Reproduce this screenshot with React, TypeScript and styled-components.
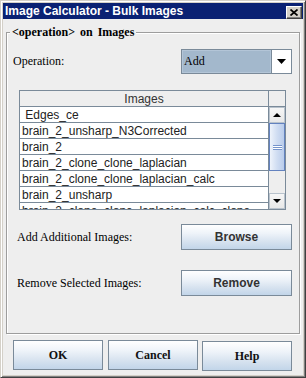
import React from 'react';
import styled, { createGlobalStyle } from 'styled-components';

const GlobalStyle = createGlobalStyle`
  html, body { margin: 0; padding: 0; background: #ffffff; }
  body { width: 306px; height: 378px; overflow: hidden; }
  *, *::before, *::after { box-sizing: border-box; }
`;

const SANS = `"Liberation Sans", Arial, sans-serif`;
const SERIF = `"Liberation Serif", "Times New Roman", serif`;

const Frame = styled.div`
  width: 306px;
  height: 378px;
  display: flex;
  flex-direction: column;
  background: #d4d0c8;
  border: 1px solid;
  border-color: #d4d0c8 #404040 #404040 #d4d0c8;
  box-shadow: inset 1px 1px 0 #ffffff, inset -1px -1px 0 #808080;
  padding: 2px;
`;

const TitleBar = styled.div`
  height: 16px;
  flex: none;
  display: flex;
  align-items: center;
  justify-content: space-between;
  padding: 0 1px 0 2px;
  background: #0a2173;
  color: #ffffff;
  font: bold 12px ${SANS};
`;

const TitleText = styled.span`
  white-space: nowrap;
  line-height: 16px;
`;

const CloseButton = styled.div`
  width: 16px;
  height: 13px;
  align-self: flex-end;
  display: flex;
  align-items: center;
  justify-content: center;
  background: #d4d0c8;
  border: 1px solid;
  border-color: #ffffff #404040 #404040 #ffffff;
  box-shadow: inset -1px -1px 0 #808080;
`;

const Content = styled.div`
  flex: 1;
  display: flex;
  flex-direction: column;
  background: #eeeeee;
  padding: 0 3px;
`;

const Group = styled.fieldset`
  margin: 6px 0 0 0;
  padding: 10px 0 37px 0;
  border: 1px solid #9d9d9d;
  box-shadow: inset 1px 1px 0 #ffffff, 1px 1px 0 #ffffff;
  min-width: 0;
  display: flex;
  flex-direction: column;
`;

const GroupTitle = styled.legend`
  margin-left: 3px;
  padding: 0 2px;
  background: #eeeeee;
  font: bold 12px ${SERIF};
  line-height: 14px;
  color: #000000;
  word-spacing: 2px;
`;

const FormRow = styled.div<{ $indent: number; $gap?: number; $h: number }>`
  display: flex;
  align-items: center;
  justify-content: space-between;
  height: ${(p) => p.$h}px;
  margin-top: ${(p) => p.$gap ?? 0}px;
  padding: 0 7px 0 ${(p) => p.$indent}px;
`;

const Label = styled.span`
  font: 12px ${SERIF};
  color: #000000;
  white-space: nowrap;
`;

const Combo = styled.div`
  width: 111px;
  height: 25px;
  display: flex;
  border: 1px solid #7a8a99;
  background: #ffffff;
`;

const ComboValue = styled.div`
  flex: 1;
  display: flex;
  align-items: center;
  padding-left: 2px;
  background: #a3b8cc;
  border-right: 1px solid #7a8a99;
  box-shadow: inset 0 0 0 1px #b3c5d7;
  font: 12px ${SERIF};
  color: #000000;
`;

const ComboArrow = styled.div`
  width: 19px;
  display: flex;
  align-items: center;
  justify-content: center;
  background: #ffffff;
`;

const TablePane = styled.div`
  margin: 16px 13px 0 12px;
  height: 120px;
  border: 1px solid #7a8a99;
  display: grid;
  grid-template-columns: 1fr 16px;
  grid-template-rows: 16px 1fr;
  background: #ffffff;
  overflow: hidden;
`;

const HeaderCell = styled.div<{ $last?: boolean }>`
  background: #eeeeee;
  border-bottom: 1px solid #7a8a99;
  border-right: ${(p) => (p.$last ? 'none' : '1px solid #7a8a99')};
  display: flex;
  align-items: center;
  justify-content: center;
  font: 12px ${SANS};
  color: #333333;
`;

const Body = styled.div`
  border-right: 1px solid #7a8a99;
  overflow: hidden;
  display: flex;
  flex-direction: column;
`;

const Row = styled.div`
  flex: none;
  height: 16px;
  border-bottom: 1px solid #7a8a99;
  display: flex;
  align-items: center;
  padding-left: 2px;
  background: #ffffff;
  font: 12px ${SANS};
  color: #222222;
  white-space: pre;
`;

const ScrollBar = styled.div`
  display: flex;
  flex-direction: column;
  background: #eeeeee;
  overflow: hidden;
`;

const ArrowButton = styled.div`
  flex: none;
  height: 16px;
  display: flex;
  align-items: center;
  justify-content: center;
  background: linear-gradient(to bottom, #f6f6f6, #e8e8e8);
  border: 1px solid #b8c2cc;
`;

const Thumb = styled.div`
  flex: none;
  height: 48px;
  display: flex;
  align-items: center;
  justify-content: center;
  border: 1px solid #6382bf;
  background: linear-gradient(to right, #eef3fb, #d0ddf2 50%, #b9cceb);
`;

const Grip = styled.div`
  width: 9px;
  height: 5px;
  background: repeating-linear-gradient(
    to bottom,
    #7594cc 0,
    #7594cc 1px,
    #ffffff 1px,
    #ffffff 2px
  );
`;

const Track = styled.div`
  flex: 1;
`;

const Button = styled.div<{ $serif?: boolean; $w: number; $h: number; $nudge?: boolean }>`
  width: ${(p) => p.$w}px;
  height: ${(p) => p.$h}px;
  flex: none;
  display: flex;
  align-items: center;
  justify-content: center;
  border: 1px solid #7a8a99;
  background: linear-gradient(to bottom, #ffffff 0%, #eef3f9 35%, #d6e2ef 70%, #c2d5e9 100%);
  font: bold 12px ${(p) => (p.$serif ? SERIF : SANS)};
  color: ${(p) => (p.$serif ? '#111111' : '#333333')};
  margin-left: ${(p) => (p.$nudge ? '-1px' : '0')};
  margin-top: ${(p) => (p.$nudge ? '1px' : '0')};
`;

const ButtonBar = styled.div`
  flex: 1;
  display: flex;
  align-items: flex-start;
  gap: 5px;
  padding: 6px 0 0 7px;
`;

const images = [
  ' Edges_ce',
  'brain_2_unsharp_N3Corrected',
  'brain_2',
  'brain_2_clone_clone_laplacian',
  'brain_2_clone_clone_laplacian_calc',
  'brain_2_unsharp',
  'brain_2_clone_clone_laplacian_calc_clone',
];

const DownTriangle = ({ w = 9, h = 5 }: { w?: number; h?: number }) => (
  <svg width={w} height={h} viewBox={`0 0 ${w} ${h}`}>
    <polygon points={`0,0 ${w},0 ${w / 2},${h}`} fill="#000000" />
  </svg>
);

const UpTriangle = ({ w = 9, h = 5 }: { w?: number; h?: number }) => (
  <svg width={w} height={h} viewBox={`0 0 ${w} ${h}`}>
    <polygon points={`0,${h} ${w},${h} ${w / 2},0`} fill="#000000" />
  </svg>
);

export default function App() {
  return (
    <>
      <GlobalStyle />
      <Frame>
        <TitleBar>
          <TitleText>Image Calculator - Bulk Images</TitleText>
          <CloseButton>
            <svg width="8" height="7" viewBox="0 0 8 7">
              <path d="M0.5 0.5 L7.5 6.5 M7.5 0.5 L0.5 6.5" stroke="#000000" strokeWidth="1.7" />
            </svg>
          </CloseButton>
        </TitleBar>
        <Content>
          <Group>
            <GroupTitle>&lt;operation&gt; on Images</GroupTitle>
            <FormRow $indent={6} $h={25}>
              <Label>Operation:</Label>
              <Combo>
                <ComboValue>Add</ComboValue>
                <ComboArrow>
                  <DownTriangle w={9} h={5} />
                </ComboArrow>
              </Combo>
            </FormRow>
            <TablePane>
              <HeaderCell>Images</HeaderCell>
              <HeaderCell $last />
              <Body>
                {images.map((name) => (
                  <Row key={name}>{name}</Row>
                ))}
              </Body>
              <ScrollBar>
                <ArrowButton>
                  <UpTriangle w={8} h={4} />
                </ArrowButton>
                <Thumb>
                  <Grip />
                </Thumb>
                <Track />
                <ArrowButton>
                  <DownTriangle w={8} h={4} />
                </ArrowButton>
              </ScrollBar>
            </TablePane>
            <FormRow $indent={10} $gap={14} $h={26}>
              <Label>Add Additional Images:</Label>
              <Button $w={111} $h={26}>Browse</Button>
            </FormRow>
            <FormRow $indent={10} $gap={20} $h={26}>
              <Label>Remove Selected Images:</Label>
              <Button $w={111} $h={26}>Remove</Button>
            </FormRow>
          </Group>
          <ButtonBar>
            <Button $serif $w={90} $h={30}>OK</Button>
            <Button $serif $w={90} $h={30}>Cancel</Button>
            <Button $serif $w={90} $h={30} $nudge>Help</Button>
          </ButtonBar>
        </Content>
      </Frame>
    </>
  );
}
